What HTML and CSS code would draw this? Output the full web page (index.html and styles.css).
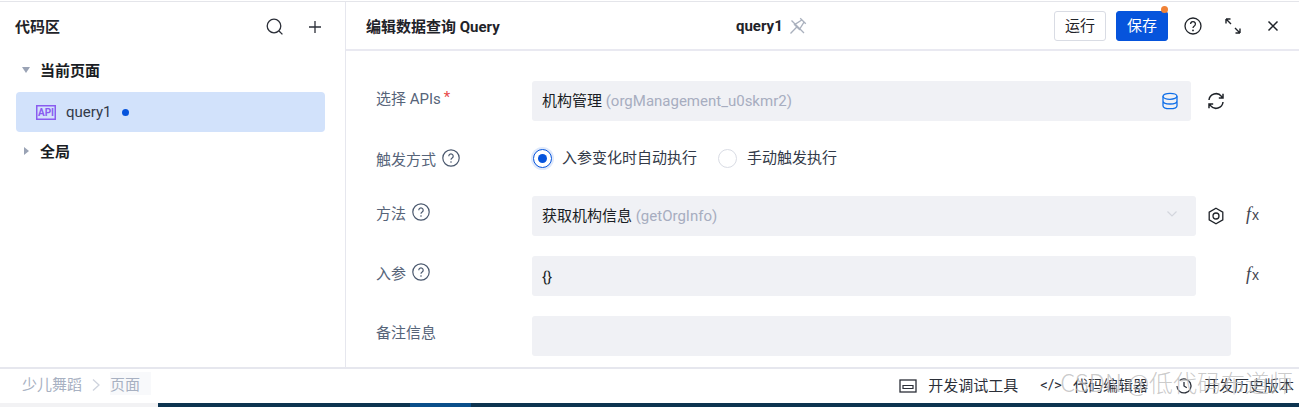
FILE: index.html
```html
<!DOCTYPE html>
<html lang="zh">
<head>
<meta charset="utf-8">
<title>代码区</title>
<link rel="stylesheet" href="styles.css">
</head>
<body>
<div class="app">
  <div class="workspace">
    <aside class="side">
      <div class="side-head">
        <span class="side-title">代码区</span>
        <div class="side-tools">
          <svg class="ic20" viewBox="0 0 20 20"><circle cx="9" cy="9" r="6.8" fill="none" stroke="#2b2f38" stroke-width="1.3"/><path d="M14 14l3.4 3.4" stroke="#2b2f38" stroke-width="1.3" fill="none"/></svg>
          <svg class="ic20" viewBox="0 0 20 20"><path d="M10 4v12M4 10h12" stroke="#2b2f38" stroke-width="1.3" fill="none"/></svg>
        </div>
      </div>
      <div class="tree-group"><i class="tri tri-down"></i><span>当前页面</span></div>
      <div class="tree-item">
        <span class="api-badge">API</span>
        <span class="item-name">query1</span>
        <i class="dot"></i>
      </div>
      <div class="tree-group"><i class="tri tri-right"></i><span>全局</span></div>
    </aside>
    <main class="editor">
      <header class="editor-head">
        <span class="editor-title">编辑数据查询 Query</span>
        <div class="editor-center">
          <span>query1</span>
          <svg class="ic18" viewBox="0 0 18 18"><path d="M11.200 1.200l5.600 5.600M12.800 3L5.500 7.600 10.400 12.500 15 5.200M7.800 10L1.500 16.500M2.500 3.500l12.500 12.500" fill="none" stroke="#a9b0bd" stroke-width="1.300"/></svg>
        </div>
        <div class="editor-actions">
          <button class="btn">运行</button>
          <button class="btn btn-primary">保存<i class="badge"></i></button>
          <svg class="ic20 act-help" viewBox="0 0 20 20"><circle cx="10" cy="10" r="8" fill="none" stroke="#1f2329" stroke-width="1.300"/><path d="M7.600 8a2.400 2.400 0 1 1 3.700 2c-.9.600-1.300 1-1.300 2" fill="none" stroke="#1f2329" stroke-width="1.300"/><circle cx="10" cy="14.400" r=".9" fill="#1f2329"/></svg>
          <svg class="ic20 act-expand" viewBox="0 0 20 20"><path d="M3 3l5 5M3 3v4.500M3 3h4.500M17 17l-5-5M17 17v-4.500M17 17h-4.500" fill="none" stroke="#1f2329" stroke-width="1.400"/></svg>
          <svg class="ic12" viewBox="0 0 12 12"><path d="M1.500 1.500l9 9M10.500 1.500l-9 9" fill="none" stroke="#1f2329" stroke-width="1.500"/></svg>
        </div>
      </header>
      <div class="form">
        <div class="row row-api">
          <label class="lab">选择 APIs <em>*</em></label>
          <div class="field field-api"><span>机构管理 <span class="muted">(orgManagement_u0skmr2)</span></span>
            <svg class="ic18 db" viewBox="0 0 18 18"><ellipse cx="9" cy="4.300" rx="7" ry="3" fill="none" stroke="#0f6fe8" stroke-width="1.300"/><path d="M2 4.300v9.400c0 1.700 3.100 3 7 3s7-1.300 7-3V4.300M2 9c0 1.700 3.100 3 7 3s7-1.300 7-3" fill="none" stroke="#0f6fe8" stroke-width="1.300"/></svg>
          </div>
          <svg class="ic20 after-sync" viewBox="0 0 20 20"><path d="M3 9a7 7 0 0 1 12.500-3.600L17 7M17 11a7 7 0 0 1-12.500 3.600L3 13M17 2.800V7h-4.200M3 17.200V13h4.200" fill="none" stroke="#1f2329" stroke-width="1.500"/></svg>
        </div>
        <div class="row row-radio">
          <label class="lab">触发方式<svg class="q" viewBox="0 0 18 18"><circle cx="9" cy="9" r="8.200" fill="none" stroke="#4a586e" stroke-width="1.200"/><path d="M6.800 7.200a2.200 2.200 0 1 1 3.400 1.800c-.8.500-1.200.9-1.200 1.800" fill="none" stroke="#4a586e" stroke-width="1.200"/><circle cx="9" cy="13" r=".8" fill="#4a586e"/></svg></label>
          <div class="radios">
            <span class="radio"><i class="rd rd-on"></i>入参变化时自动执行</span>
            <span class="radio"><i class="rd"></i>手动触发执行</span>
          </div>
        </div>
        <div class="row row-method">
          <label class="lab">方法<svg class="q" viewBox="0 0 18 18"><circle cx="9" cy="9" r="8.200" fill="none" stroke="#4a586e" stroke-width="1.200"/><path d="M6.800 7.200a2.200 2.200 0 1 1 3.400 1.800c-.8.500-1.200.9-1.200 1.800" fill="none" stroke="#4a586e" stroke-width="1.200"/><circle cx="9" cy="13" r=".8" fill="#4a586e"/></svg></label>
          <div class="field field-short"><span>获取机构信息 <span class="muted">(getOrgInfo)</span></span>
            <svg class="chev" viewBox="0 0 12 12"><path d="M1.500 3.500L6 8l4.500-4.500" fill="none" stroke="#d3d6dd" stroke-width="1.200"/></svg>
          </div>
          <svg class="ic18 hex" viewBox="0 0 18 18"><path d="M9 1.200l6.800 3.900v7.800L9 16.800l-6.800-3.900V5.100z" fill="none" stroke="#1f2329" stroke-width="1.300"/><circle cx="9" cy="9" r="3" fill="none" stroke="#1f2329" stroke-width="1.300"/></svg>
          <span class="fx"><i>f</i><span>x</span></span>
        </div>
        <div class="row row-param">
          <label class="lab">入参<svg class="q" viewBox="0 0 18 18"><circle cx="9" cy="9" r="8.200" fill="none" stroke="#4a586e" stroke-width="1.200"/><path d="M6.800 7.200a2.200 2.200 0 1 1 3.400 1.800c-.8.500-1.200.9-1.200 1.800" fill="none" stroke="#4a586e" stroke-width="1.200"/><circle cx="9" cy="13" r=".8" fill="#4a586e"/></svg></label>
          <div class="field field-short field-code"><span>{}</span></div>
          <span class="fx fx-alone"><i>f</i><span>x</span></span>
        </div>
        <div class="row row-note">
          <label class="lab lab-note">备注信息</label>
          <div class="field field-wide"></div>
        </div>
      </div>
    </main>
  </div>
  <footer class="status">
    <div class="crumbs">
      <span>少儿舞蹈</span>
      <svg class="crumb-sep" viewBox="0 0 10 14"><path d="M2 1.500L8 7l-6 5.500" fill="none" stroke="#ced3dd" stroke-width="1.300"/></svg>
      <span class="crumb-cur">页面</span>
    </div>
    <div class="tools">
      <span class="tool tool-debug"><svg class="ic18" viewBox="0 0 18 18"><rect x="1" y="3" width="16" height="12" fill="none" stroke="#2b2f38" stroke-width="1.300"/><path d="M4 8.500h10v3H4z" fill="none" stroke="#2b2f38" stroke-width="1.200"/></svg>开发调试工具</span>
      <span class="tool"><span class="code-ic">&lt;/&gt;</span>代码编辑器</span>
      <span class="tool tool-hist"><svg class="ic18" viewBox="0 0 18 18"><path d="M2 9a7 7 0 1 0 2.600-5.500M9 5v4l2.800 1.700" fill="none" stroke="#2b2f38" stroke-width="1.300"/></svg>开发历史版本</span>
    </div>
    <span class="watermark">CSDN @低代码布道师</span>
  </footer>
  <div class="strip"><i class="strip-blank"></i><i class="strip-dark"></i><i class="strip-blue"></i><i class="strip-rest"></i></div>
</div>
</body>
</html>
```
FILE: styles.css
```css
* { box-sizing: border-box; }
html, body { margin: 0; height: 100%; background: #fff; overflow: hidden; }
body { font-family: Roboto, "Noto Sans CJK SC", sans-serif; font-size: 15px; color: #1f2329; }
svg { display: block; flex: none; }
.app { width: 1299px; height: 407px; display: flex; flex-direction: column; padding-top: 1px; }
.workspace { flex: 1; min-height: 0; display: flex; border-top: 1px solid #e4e5ea; border-bottom: 2px solid #e6e7ee; }
.side { width: 346px; flex: none; border-right: 1px solid #e6e7ee; padding: 0 20px 0 16px; }
.side-head { height: 48px; display: flex; align-items: center; justify-content: space-between; }
.side-title { font-weight: 700; margin: 0 0 2px -1px; }
.side-tools { display: flex; gap: 20px; margin-top: 1px; }
.ic20 { width: 20px; height: 20px; }
.ic18 { width: 18px; height: 18px; }
.ic12 { width: 12px; height: 12px; }
.q { width: 18px; height: 18px; }
.tree-group { height: 40px; display: flex; align-items: center; font-weight: 700; color: #1a1d24; padding-bottom: 3px; }
.side-head + .tree-group { padding-bottom: 1px; }
.tri { width: 0; height: 0; display: block; margin-right: 10px; }
.tri-down { margin-left: 6px; border-left: 4px solid transparent; border-right: 4px solid transparent; border-top: 6px solid #9aa3b5; }
.tri-right { margin-left: 8px; margin-right: 11px; border-top: 4px solid transparent; border-bottom: 4px solid transparent; border-left: 5px solid #9aa3b5; }
.tree-item { height: 40px; margin-top: 2px; display: flex; align-items: center; background: #d2e2fb; border-radius: 4px; padding-left: 20px; width: 309px; }
.api-badge { width: 20px; height: 15px; border: 1px solid #8a5cf0; box-shadow: inset 0 0 0 .5px #8a5cf0; color: #8a5cf0; font: 700 10px/13px Roboto, sans-serif; text-align: center; }
.item-name { margin: 0 0 1px 10px; color: #333a48; }
.dot { width: 7px; height: 7px; border-radius: 50%; background: #0654dc; margin-left: 10px; }
.editor { flex: 1; min-width: 0; display: flex; flex-direction: column; }
.editor-head { height: 49px; flex: none; border-bottom: 2px solid #e9e9f1; display: flex; align-items: center; padding: 0 20px 0 20px; }
.editor-title { font-weight: 700; width: 370px; white-space: nowrap; margin-top: -1px; }
.editor-center { display: flex; align-items: center; gap: 6px; font-weight: 700; }
.editor-actions { margin-left: auto; display: flex; align-items: center; }
.btn { height: 30px; width: 52px; border: 1px solid #d9dce4; background: #fff; border-radius: 3px; font: 15px Roboto, "Noto Sans CJK SC", sans-serif; color: #1f2329; padding: 0 0 2px; position: relative; }
.btn-primary { background: #0654dc; border-color: #0654dc; color: #fff; margin-left: 10px; }
.badge { position: absolute; right: -1px; top: -6px; width: 7px; height: 7px; border-radius: 50%; background: #f08236; }
.act-help { margin-left: 15px; }
.act-expand { margin-left: 20px; }
.ic12 { margin-left: 24px; }
.form { padding: 30px 0 0 30px; }
.row { display: flex; align-items: center; height: 40px; }
.row-radio { height: 35px; margin: 20px 0 20px; }
.row-method, .row-param { margin-bottom: 20px; }
.lab { width: 156px; flex: none; color: #566479; display: flex; align-items: center; gap: 6px; align-self: flex-start; height: 32px; white-space: nowrap; }
.lab-note { height: 31px; }
.row-radio .lab { align-self: center; margin-top: -1px; }
.lab em { color: #e84a4a; font-style: normal; margin-left: -3px; }
.field { height: 40px; background: #f0f1f5; border-radius: 3px; display: flex; align-items: center; padding: 0 10px 4px; justify-content: space-between; color: #1a1d24; }
.field-api { width: 659px; }
.field-short { width: 664px; }
.field-wide { width: 699px; }
.field-code { padding: 2px 10px 0; }
.muted { color: #a7adc0; }
.db { margin: 4px 2px 0 0; }
.chev { width: 12px; height: 12px; margin-right: 8px; }
.after-sync { margin-left: 15px; }
.hex { margin-left: 11px; }
.fx { font: 14px "Liberation Sans", sans-serif; color: #3f4450; margin: 0 0 4px 21px; width: 22px; display: flex; align-items: baseline; }
.fx i { font: italic 18px "Liberation Serif", serif; margin-right: 1px; }
.fx-alone { margin-left: 50px; }
.radios { display: flex; align-items: center; gap: 21px; }
.radio { display: flex; align-items: center; gap: 10px; color: #333a48; white-space: nowrap; padding-bottom: 4px; }
.rd { width: 19px; height: 19px; margin-bottom: -4px; border-radius: 50%; border: 1px solid #d9dce4; background: #fff; display: block; }
.rd-on { margin-left: 1px; border: 1px solid #0654dc; box-shadow: 0 0 0 2px #dfe9fb; position: relative; }
.rd-on::after { content: ""; position: absolute; inset: 4px; border-radius: 50%; background: #0654dc; }
.status { height: 34px; flex: none; display: flex; align-items: center; justify-content: space-between; position: relative; padding: 0 5px 0 22px; }
.crumbs { display: flex; align-items: center; color: #a8b1c2; margin-top: -5px; }
.crumb-sep { width: 10px; height: 14px; margin: 3px 9px 0 9px; }
.crumb-cur { background: #f8f9fb; padding: 1px 11px 1px 0; }
.tools { display: flex; align-items: center; gap: 24px; white-space: nowrap; margin-top: -3px; }
.tool { display: flex; align-items: center; gap: 11px; color: #2b2f38; }
.tool svg { margin-top: 3px; }
.tool-debug { margin-right: -2px; }
.tool-hist { margin-left: 3px; }
.code-ic { font: 15px Roboto, sans-serif; }
.watermark { position: absolute; right: 6px; top: -5px; font: 300 24px "Noto Sans CJK SC", sans-serif; color: rgba(120,120,120,.4); text-shadow: 0 0 1px rgba(255,255,255,.8); white-space: nowrap; pointer-events: none; }
.strip { height: 4px; flex: none; display: flex; }
.strip i { display: block; height: 100%; }
.strip-blank { width: 158px; background: #f2f2f4; }
.strip-dark { width: 252px; background: #0d3450; }
.strip-blue { width: 61px; background: #0a4f8a; }
.strip-rest { flex: 1; background: #0d3450; }
```
